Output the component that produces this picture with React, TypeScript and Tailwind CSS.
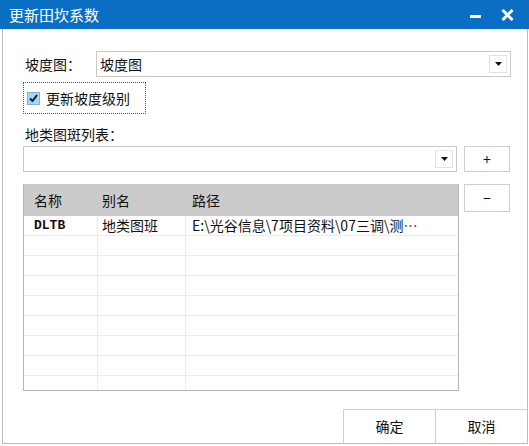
import React from "react";

const cjk = { fontFamily: '"Noto Sans CJK SC", "Noto Sans", sans-serif' };

function DropButton() {
  return (
    <div className="flex h-[18px] w-[18px] items-center justify-center border border-[#e2e2e2] bg-white">
      <svg width="7" height="4" viewBox="0 0 7 4">
        <path d="M0 0 L7 0 L3.5 4 Z" fill="#111" />
      </svg>
    </div>
  );
}

function Combo({ value, className }: { value?: string; className: string }) {
  return (
    <div
      className={`flex h-[26px] items-center justify-between border border-[#c9c9c9] bg-white pl-[3px] pr-[3px] ${className}`}
    >
      <span className="text-[14px] text-[#111]">{value ?? ""}</span>
      <DropButton />
    </div>
  );
}

const rows = Array.from({ length: 8 });

export default function App() {
  return (
    <div className="relative h-[446px] w-[529px] overflow-hidden bg-white text-[#111]" style={cjk}>
      {/* title bar */}
      <div className="flex h-[29px] items-center justify-between bg-[#0a6fc3] pl-[9px] pr-[15px]">
        <span className="text-[15px] leading-none text-white">更新田坎系数</span>
        <div className="flex items-center gap-[20px]">
          <svg width="11" height="10" viewBox="0 0 11 10">
            <rect x="0" y="5" width="11" height="3" fill="#fff" />
          </svg>
          <svg width="13" height="12" viewBox="0 0 13 12">
            <path d="M1.5 1 L11.5 11 M11.5 1 L1.5 11" stroke="#fff" strokeWidth="3" />
          </svg>
        </div>
      </div>

      {/* body */}
      <div className="ml-[2px] mr-[1px] flex h-[415px] flex-col border-b border-l border-r border-[#bdbdbd] pl-[20px]">
        <div className="mt-[22px] flex h-[26px] items-center">
          <span className="w-[73px] pl-[2px] text-[14px]">坡度图：</span>
          <Combo value="坡度图" className="w-[415px]" />
        </div>

        <div className="mt-[5px] flex h-[32px] items-center">
          <div className="flex h-[32px] w-[123px] items-center gap-[6px] border border-dotted border-[#555] pl-[3px]">
            <div className="flex h-[13px] w-[13px] items-center justify-center border border-[#7ab3db] bg-[#a9d4f2]">
              <svg width="9" height="8" viewBox="0 0 9 8">
                <path d="M1 4.5 L3.5 7 L8 1" stroke="#0b1a3a" strokeWidth="2" fill="none" />
              </svg>
            </div>
            <span className="text-[14px]">更新坡度级别</span>
          </div>
        </div>

        <div className="mt-[10px] h-[20px] pl-[2px] text-[14px] leading-[20px]">地类图斑列表：</div>

        <div className="mt-[2px] flex h-[26px] items-center">
          <Combo className="w-[434px]" />
          <button className="ml-[7px] flex h-[26px] w-[46px] items-center justify-center border border-[#cfcfcf] bg-white text-[14px] leading-none">
            +
          </button>
        </div>

        <div className="mt-[12px] flex items-start">
          <div className="w-[436px] border-b border-l border-r border-[#b4b4b4]">
            <div className="grid h-[32px] grid-cols-[74px_88px_1fr] items-center bg-[#cbcbcb] text-[14px]">
              <span className="pl-[10px]">名称</span>
              <span className="pl-[4px]">别名</span>
              <span className="pl-[6px]">路径</span>
            </div>
            {rows.map((_, i) => (
              <div
                key={i}
                className="grid h-[20px] grid-cols-[74px_88px_1fr] border-b border-[#ececec] text-[14px] leading-[19px]"
              >
                <span className="border-r border-[#ececec] pl-[10px] font-[family-name:'Liberation_Mono',monospace] text-[13px] font-semibold">
                  {i === 0 ? "DLTB" : ""}
                </span>
                <span className="border-r border-[#ececec] pl-[4px]">{i === 0 ? "地类图班" : ""}</span>
                <span className="overflow-hidden whitespace-nowrap pl-[6px] text-[14px]">
                  {i === 0 ? "E:\\光谷信息\\7项目资料\\07三调\\测…" : ""}
                </span>
              </div>
            ))}
            <div className="grid h-[14px] grid-cols-[74px_88px_1fr]">
              <span className="border-r border-[#ececec]" />
              <span className="border-r border-[#ececec]" />
              <span />
            </div>
          </div>
          <button className="ml-[5px] flex h-[28px] w-[46px] items-center justify-center border border-[#cfcfcf] bg-white text-[14px] leading-none">
            −
          </button>
        </div>

        <div className="mt-auto flex justify-end">
          <button className="h-[34px] w-[92px] border-l border-t border-[#cfcfcf] bg-white text-[14px]">确定</button>
          <button className="h-[34px] w-[92px] border-l border-t border-[#cfcfcf] bg-white text-[14px]">取消</button>
        </div>
      </div>
    </div>
  );
}
